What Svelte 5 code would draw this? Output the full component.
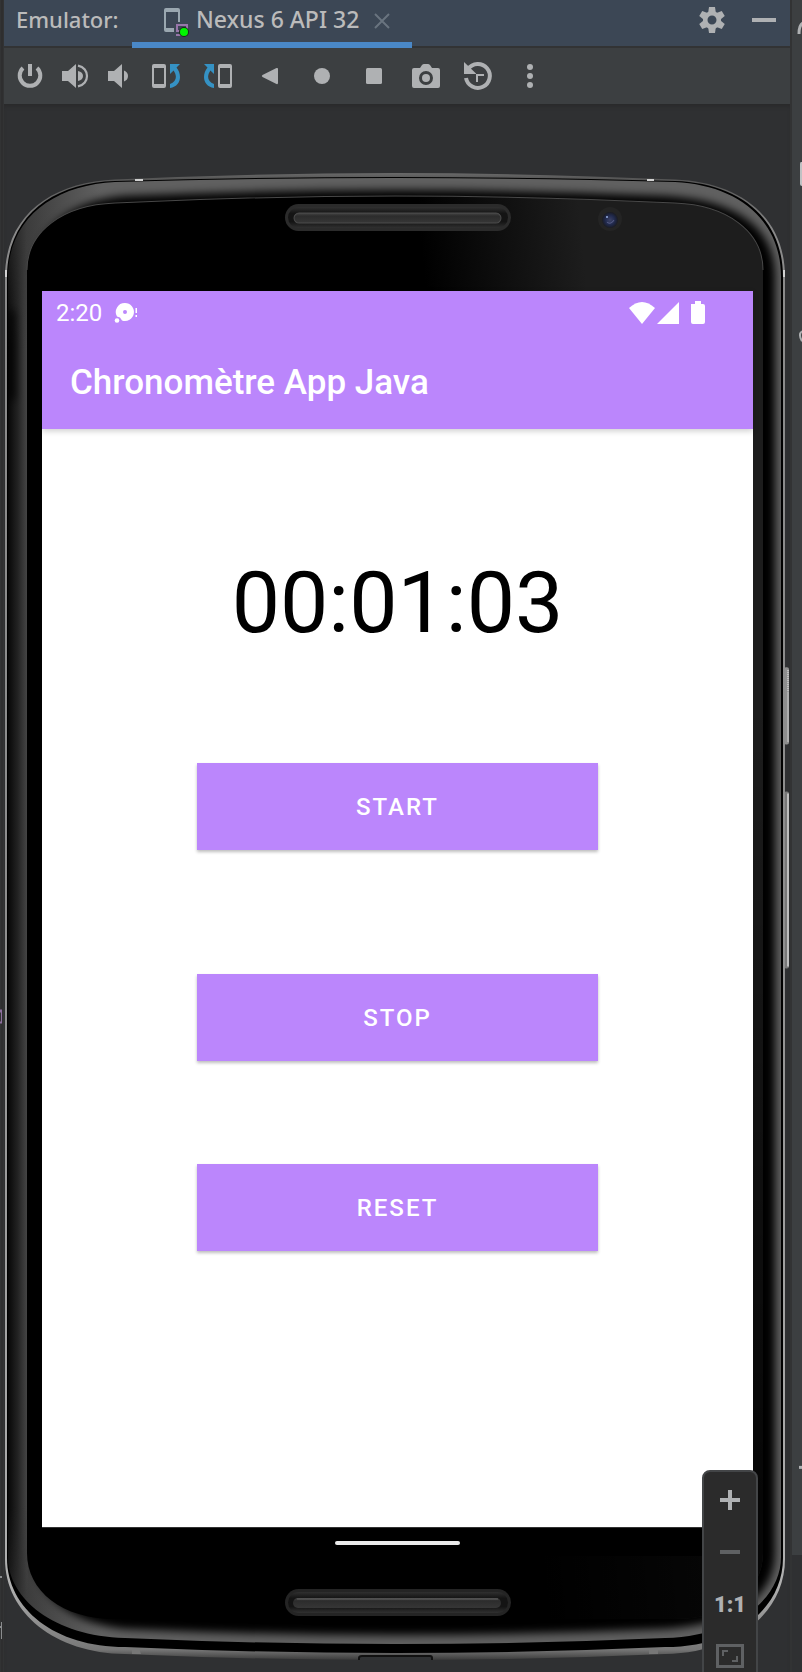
<script>
  import { onDestroy } from 'svelte';

  let seconds = $state(63);
  let timer = null;

  const pad = (n) => String(n).padStart(2, '0');
  let display = $derived(
    `${pad(Math.floor(seconds / 3600))}:${pad(Math.floor(seconds / 60) % 60)}:${pad(seconds % 60)}`
  );

  function start() {
    if (!timer) timer = setInterval(() => (seconds += 1), 1000);
  }
  function stop() {
    clearInterval(timer);
    timer = null;
  }
  function reset() {
    stop();
    seconds = 0;
  }
  onDestroy(stop);
</script>

<div class="ide">
  <div class="edge left" aria-hidden="true">
    <svg viewBox="0 0 4 1672" preserveAspectRatio="none">
      <path d="M2 0V1672" stroke="#2b2b2b" stroke-width="1" />
      <path d="M0 1009H2V1023H0V1021H1V1012H0Z" fill="#8d6f9e" />
      <path d="M0 1575H2V1577H0ZM1 1621H2V1638H1ZM0 1625H1V1627H0Z" fill="#8a8c8e" />
    </svg>
  </div>

  <main class="panel">
    <header class="titlebar">
      <span class="label">Emulator:</span>
      <div class="tab">
        <svg width="26" height="30" viewBox="0 0 26 30" aria-hidden="true">
          <path fill="#9aa7b0" fill-rule="evenodd" d="M2 0H14Q16 0 16 2V14H14V4H2V20H10V24H2Q0 24 0 22V2Q0 0 2 0Z" />
          <path fill="#9876aa" d="M12 16H24V24H22V18H14V22H18V24H12ZM12 26H17V28H12Z" />
          <circle cx="20" cy="24" r="5" fill="#1c2a1c" />
          <circle cx="20" cy="24" r="4" fill="#00f600" />
        </svg>
        <span class="name">Nexus 6 API 32</span>
        <button class="close" aria-label="Close tab">
          <svg width="16" height="16" viewBox="0 0 16 16"><path d="M1 1L15 15M15 1L1 15" stroke="#69747f" stroke-width="2" /></svg>
        </button>
      </div>
      <div class="actions">
        <button aria-label="Settings">
          <svg width="28" height="28" viewBox="-14 -14 28 28">
            <g fill="#afb1b3">
              {#each [0, 60, 120, 180, 240, 300] as angle}
                <path d="M-3 -13H3L4 -6H-4Z" transform="rotate({angle})" />
              {/each}
            </g>
            <circle r="6.8" fill="none" stroke="#afb1b3" stroke-width="4.6" />
          </svg>
        </button>
        <button aria-label="Hide">
          <svg width="28" height="28" viewBox="-14 -14 28 28"><path d="M-12 -2H12V2H-12Z" fill="#afb1b3" /></svg>
        </button>
      </div>
    </header>

    <div class="toolbar" role="toolbar" aria-label="Emulator controls">
      <button class="narrow" aria-label="Power">
        <svg viewBox="-16 -16 32 32"><path d="M-7 -8A10.300 10.300 0 1 0 7 -8" fill="none" stroke="#afb1b3" stroke-width="4" /><path d="M-2 -12H2V0H-2Z" /></svg>
      </button>
      <button class="narrow" aria-label="Volume up">
        <svg viewBox="-16 -16 32 32"><path d="M-12 -5H-6L2 -12V12L-6 5H-12ZM4 -5Q9 -4 9 0T4 5Z" /><path d="M4 -10.300C16 -8 16 8 4 10.300" fill="none" stroke="#afb1b3" stroke-width="2.2" /></svg>
      </button>
      <button class="narrow" aria-label="Volume down">
        <svg viewBox="-16 -16 32 32"><path d="M-10 -5H-4L4 -12V12L-4 5H-10ZM6 -5.500Q10 -4 10 0T6 5.500Z" /></svg>
      </button>
      <button aria-label="Rotate left">
        <svg viewBox="-16 -16 32 32">
          <path fill-rule="evenodd" d="M-12 -12H-2Q0 -12 0 -10V10Q0 12 -2 12H-12Q-14 12 -14 10V-10Q-14 -12 -12 -12ZM-12 -8V8H-2V-8Z" />
          <path fill="#3592c4" d="M4 -12H14L10.500 -8.500C16.500 -1 15 10 4 12V8C10.500 6 11.500 0 7.600 -5.600L4 -2Z" />
        </svg>
      </button>
      <button aria-label="Rotate right">
        <svg viewBox="-16 -16 32 32">
          <g transform="scale(-1 1)">
            <path fill-rule="evenodd" d="M-12 -12H-2Q0 -12 0 -10V10Q0 12 -2 12H-12Q-14 12 -14 10V-10Q-14 -12 -12 -12ZM-12 -8V8H-2V-8Z" />
            <path fill="#3592c4" d="M4 -12H14L10.500 -8.500C16.500 -1 15 10 4 12V8C10.500 6 11.500 0 7.600 -5.600L4 -2Z" />
          </g>
        </svg>
      </button>
      <button aria-label="Back">
        <svg viewBox="-16 -16 32 32"><path d="M-7.500 -1L6.500 -8Q8 -8.500 8 -7V7Q8 8.500 6.500 8L-7.500 1Q-9 0 -7.500 -1Z" /></svg>
      </button>
      <button aria-label="Home">
        <svg viewBox="-16 -16 32 32"><circle r="8" /></svg>
      </button>
      <button aria-label="Overview">
        <svg viewBox="-16 -16 32 32"><rect x="-8" y="-8" width="16" height="16" rx="1.500" /></svg>
      </button>
      <button aria-label="Screenshot">
        <svg viewBox="-16 -16 32 32">
          <path fill-rule="evenodd" d="M-12 -8H-6L-4 -11Q-3 -12 -2 -12H2Q3 -12 4 -11L6 -8H12Q14 -8 14 -6V10Q14 12 12 12H-12Q-14 12 -14 10V-6Q-14 -8 -12 -8ZM0 -5A7 7 0 1 0 0 9A7 7 0 1 0 0 -5Z" />
          <circle cy="2" r="4" />
        </svg>
      </button>
      <button aria-label="Snapshots">
        <svg viewBox="-16 -16 32 32">
          <path d="M-10 -7A12 12 0 1 1 -12 2" fill="none" stroke="#afb1b3" stroke-width="4" />
          <path d="M-14 -14L-2 -2.500V-2H-14ZM-2 -2H6V0H0V6H-2Z" />
        </svg>
      </button>
      <button aria-label="More">
        <svg viewBox="-16 -16 32 32"><circle cy="-9" r="3" /><circle r="3" /><circle cy="9" r="3" /></svg>
      </button>
    </div>

    <section class="stage">
      <svg class="phone" viewBox="4 104 786 1568" preserveAspectRatio="none" aria-hidden="true">
        <defs>
          <linearGradient id="rim" x1="0" x2="0" y1="0" y2="1">
            <stop offset="0" stop-color="#6a6a6a" />
            <stop offset="0.004" stop-color="#555" />
            <stop offset="0.04" stop-color="#8a8a8a" />
            <stop offset="0.5" stop-color="#8e8e8e" />
            <stop offset="0.95" stop-color="#b0b0b0" />
            <stop offset="0.993" stop-color="#777" />
            <stop offset="1" stop-color="#3a3a3a" />
          </linearGradient>
          <linearGradient id="body" gradientUnits="userSpaceOnUse" x1="8" x2="782" y1="0" y2="0">
            <stop offset="0" stop-color="#1c1c1c" />
            <stop offset="0.024" stop-color="#3c3c3c" />
            <stop offset="0.12" stop-color="#606060" />
            <stop offset="1" stop-color="#606060" />
          </linearGradient>
          <linearGradient id="leftshade" gradientUnits="userSpaceOnUse" x1="8" x2="27" y1="0" y2="0">
            <stop offset="0" stop-color="#070707" />
            <stop offset="0.500" stop-color="#222" />
            <stop offset="1" stop-color="#454545" />
          </linearGradient>
          <linearGradient id="sidefade" x1="0" x2="0" y1="0" y2="1">
            <stop offset="0" stop-color="#000" />
            <stop offset="0.08" stop-color="#fff" />
            <stop offset="0.93" stop-color="#fff" />
            <stop offset="1" stop-color="#000" />
          </linearGradient>
          <mask id="sidemask" maskUnits="userSpaceOnUse" x="0" y="240" width="40" height="1360">
            <rect x="0" y="240" width="40" height="1360" fill="url(#sidefade)" />
          </mask>
          <linearGradient id="glass" gradientUnits="userSpaceOnUse" x1="420" x2="580" y1="230" y2="215">
            <stop offset="0" stop-color="#000" />
            <stop offset="1" stop-color="#1d1d1d" />
          </linearGradient>
          <linearGradient id="fade" gradientUnits="userSpaceOnUse" x1="0" x2="0" y1="700" y2="1500">
            <stop offset="0" stop-color="#000" stop-opacity="0" />
            <stop offset="1" stop-color="#000" stop-opacity="0.8" />
          </linearGradient>
          <linearGradient id="well" x1="0" x2="0" y1="0" y2="1">
            <stop offset="0" stop-color="#303030" />
            <stop offset="0.300" stop-color="#141414" />
            <stop offset="0.700" stop-color="#141414" />
            <stop offset="1" stop-color="#303030" />
          </linearGradient>
          <linearGradient id="bar" x1="0" x2="0" y1="0" y2="1">
            <stop offset="0" stop-color="#444" />
            <stop offset="0.300" stop-color="#2c2c2c" />
            <stop offset="1" stop-color="#363636" />
          </linearGradient>
          <radialGradient id="lens">
            <stop offset="0" stop-color="#3c4266" />
            <stop offset="0.600" stop-color="#20294c" />
            <stop offset="1" stop-color="#1a1b22" />
          </radialGradient>
          <filter id="soft" filterUnits="userSpaceOnUse" x="0" y="160" width="800" height="1510">
            <feGaussianBlur stdDeviation="4" />
          </filter>
          <clipPath id="bodyclip">
            <path d="M8 277C8 218 54 185 115 182Q260 178 395 178Q530 178 675 182C736 185 781 218 781 277V1556C781 1598 736 1635 665 1637Q530 1643 395 1643Q260 1643 125 1637C54 1635 8 1598 8 1556Z" />
          </clipPath>
        </defs>

        <!-- volume and power keys -->
        <rect x="784" y="667" width="5" height="77" rx="2" fill="#8d8d8d" />
        <path d="M788 670V741" stroke="#d0d0d0" stroke-width="2" stroke-dasharray="1 1" />
        <rect x="784" y="791" width="5" height="177" rx="2" fill="#777" />
        <path d="M788 793V966" stroke="#d4d4d4" stroke-width="1.500" />

        <!-- metal rim, seam, body and glass -->
        <path fill="url(#rim)" d="M5 277C5 215 52 182 115 179.500Q260 173 395 173Q530 173 675 179.500C738 182 785 215 785 277V1558C785 1612 735 1652 665 1653Q530 1659 395 1659Q260 1659 125 1653C55 1652 5 1612 5 1558Z" />
        <path fill="#000" d="M7 277C7 216 53 183 115 181Q260 177 395 177Q530 177 675 181C737 183 783 216 783 277V1557C783 1608 735 1646 665 1646Q530 1652 395 1652Q260 1652 125 1646C55 1646 7 1608 7 1557Z" />
        <g clip-path="url(#bodyclip)">
          <path fill="url(#body)" d="M0 170H790V1650H0Z" />
          <path fill="#000" filter="url(#soft)" d="M34 277C34 228 72 200 125 196Q260 190 395 190Q530 190 665 196C738 200 775 228 775 277V1552C775 1594 738 1623 665 1628Q530 1634 395 1634Q260 1634 125 1628C72 1623 34 1594 34 1552Z" />
          <g mask="url(#sidemask)">
            <rect x="8" y="240" width="20" height="1360" fill="url(#leftshade)" />
          </g>
          <rect x="8" y="310" width="6" height="90" rx="3" fill="#000" filter="url(#soft)" />
        </g>
        <path fill="#000" d="M27 270C27 232 62 205 115 203Q260 196 395 196Q530 196 675 203C728 205 763 232 763 270V1552C763 1590 728 1618 675 1618H115C62 1618 27 1590 27 1552Z" />
        <path fill="url(#glass)" d="M395 196Q530 196 675 203C728 205 763 232 763 270V1552C763 1590 728 1618 675 1618H395Z" />
        <path fill="url(#fade)" d="M395 700H763V1552C763 1590 728 1618 675 1618H395Z" />
        <path fill="none" stroke="#484848" d="M27 270C27 232 62 205 115 203Q260 196 395 196Q530 196 675 203C728 205 763 232 763 270" />

        <!-- antenna breaks -->
        <path fill="#d2d2d2" d="M135 179H143V181H135ZM647 179H654V181H647ZM5 270H7V277H5ZM783 270H785V277H783Z" />
        <path fill="#777" d="M132 1647H139L141 1653H132ZM649 1647H658V1653H649Z" />
        <path d="M359 1659V1657Q359 1655 362 1655H430Q432 1655 432 1657V1659" fill="#303234" stroke="#111" stroke-width="2" />

        <!-- speaker grilles -->
        <rect x="285" y="204" width="226" height="27" rx="13.500" fill="#2b2b2b" />
        <rect x="288" y="207" width="220" height="21" rx="10.500" fill="url(#well)" />
        <rect x="294" y="213" width="207" height="10" rx="5" fill="url(#bar)" stroke="#4c4c4c" />
        <rect x="285" y="1588" width="226" height="27" rx="13.500" fill="#242424" />
        <rect x="288" y="1591" width="220" height="21" rx="10.500" fill="url(#well)" />
        <rect x="293" y="1597" width="208" height="10" rx="5" fill="url(#bar)" />
        <path d="M297 1598H498" stroke="#606060" />

        <!-- front camera -->
        <circle cx="610" cy="219" r="12" fill="#242424" />
        <circle cx="610" cy="220" r="8" fill="url(#lens)" />
        <circle cx="607" cy="217" r="1" fill="#9ab0e0" />
        <path d="M607 222Q611 225 614 220" fill="none" stroke="#555b85" />
      </svg>

      <div class="screen">
        <div class="appheader">
          <div class="status">
            <span>2:20</span>
            <svg class="notice" width="24" height="22" viewBox="0 0 24 22" aria-hidden="true">
              <path fill="#fff" fill-rule="evenodd" d="M11 1A9 9 0 1 1 8 18.500L6 15.500L3 14.500A9 9 0 0 1 11 1ZM11 8A2 2 0 1 0 11 12A2 2 0 1 0 11 8Z" />
              <circle cx="3" cy="18.500" r="2.300" fill="#fff" />
              <path fill="#fff" d="M21.500 6H23V11H21.500ZM21.500 13H23V15H21.500Z" />
            </svg>
            <svg class="signals" width="78" height="26" viewBox="0 0 78 26" aria-hidden="true">
              <path fill="#fff" d="M1 8Q14 -4 27 8L14 24Z" />
              <path fill="#fff" d="M29 24L51 2V24Z" />
              <path fill="#fff" d="M63 4H67V1H73V4H75Q77 4 77 6V22Q77 24 75 24H65Q63 24 63 22Z" />
            </svg>
          </div>
          <h1>Chronomètre App Java</h1>
        </div>

        <div class="content">
          <output class="time">{display}</output>
          <button class="start" onclick={start}>START</button>
          <button class="stop" onclick={stop}>STOP</button>
          <button class="reset" onclick={reset}>RESET</button>
        </div>

        <div class="gesture"><span></span></div>
      </div>

      <div class="zoom">
        <button aria-label="Zoom in"><svg width="20" height="20" viewBox="0 0 20 20"><path d="M8 0H12V8H20V12H12V20H8V12H0V8H8Z" fill="#afb1b3" /></svg></button>
        <button aria-label="Zoom out"><svg width="20" height="20" viewBox="0 0 20 20"><path d="M0 8H20V12H0Z" fill="#5f6163" /></svg></button>
        <button class="ratio">1:1</button>
        <button aria-label="Zoom to fit">
          <svg width="28" height="24" viewBox="0 0 28 24"><path d="M1.500 1.500H26.500V22.500H1.500Z" fill="none" stroke="#5f6163" stroke-width="3" /><path d="M7 12V7H12M16 17H21V12" fill="none" stroke="#5f6163" stroke-width="2" /></svg>
        </button>
      </div>
    </section>
  </main>

  <div class="edge right" aria-hidden="true">
    <svg viewBox="0 0 12 1672" preserveAspectRatio="none">
      <path fill="#3c3f41" d="M2 0H12V1554H2Z" />
      <path fill="#2f3032" d="M2 1554H12V1672H2Z" />
      <path d="M9 34Q9 25 13 23" fill="none" stroke="#afb1b3" stroke-width="3" />
      <path d="M12 162H11Q10 162 10 164V184Q10 186 12 186Z" fill="#bfc1c3" />
      <path d="M12 331Q8 334 12 341" fill="none" stroke="#afb1b3" stroke-width="2" />
      <path d="M9 1465H12V1468H9Z" fill="#afb1b3" />
    </svg>
  </div>
</div>

<style>
  :global(body) {
    margin: 0;
    background: #2f3032;
  }
  .ide {
    display: grid;
    grid-template-columns: 4px minmax(0, 1fr) 12px;
    background: #2f3032;
    font-family: 'Noto Sans', sans-serif;
  }
  button {
    margin: 0;
    padding: 0;
    border: 0;
    background: none;
    color: inherit;
    font: inherit;
    cursor: pointer;
  }
  svg {
    display: block;
  }
  .edge {
    position: relative;
    background: #323334;
  }
  .edge svg {
    position: absolute;
    inset: 0;
    width: 100%;
    height: 100%;
  }
  .titlebar {
    display: flex;
    height: 46px;
    border-bottom: 2px solid #323334;
    background: #3c4755;
    color: #bbbbbb;
    font-size: 22px;
    font-weight: 500;
    line-height: 38px;
  }
  .label {
    width: 128px;
    padding-left: 12px;
    box-sizing: border-box;
  }
  .tab {
    display: flex;
    box-sizing: border-box;
    width: 280px;
    height: 48px;
    padding: 0 22px 0 32px;
    border-bottom: 6px solid #4a88c7;
    font-size: 23px;
  }
  .tab > svg {
    margin-top: 8px;
  }
  .name {
    margin-left: 6px;
    white-space: nowrap;
  }
  .close {
    display: flex;
    align-items: center;
    margin-left: auto;
  }
  .actions {
    display: flex;
    gap: 24px;
    margin-left: auto;
    padding-right: 12px;
  }
  .actions button {
    height: 40px;
  }
  .toolbar {
    display: flex;
    height: 56px;
    padding-left: 4px;
    background: #3c3f41;
  }
  .toolbar button {
    display: grid;
    place-items: center;
    width: 52px;
  }
  .toolbar .narrow {
    width: 44px;
  }
  .toolbar svg {
    width: 32px;
    height: 32px;
    fill: #afb1b3;
  }
  .stage {
    position: relative;
    overflow: hidden;
    padding: 187px 37px 117px 38px;
    background: #2f3032;
    box-shadow: inset 0 4px 4px -2px #29292a;
  }
  .phone {
    position: absolute;
    inset: 0;
    width: 100%;
    height: 100%;
  }
  .screen {
    position: relative;
    font-family: Roboto, sans-serif;
  }
  .appheader {
    position: relative;
    background: #bb86fc;
    color: #fff;
    box-shadow: 0 2px 6px rgba(0, 0, 0, 0.2);
  }
  .status {
    display: flex;
    align-items: center;
    height: 44px;
    padding: 0 47px 0 14px;
    box-sizing: border-box;
    font-size: 24px;
  }
  .notice {
    margin-left: 12px;
  }
  .signals {
    margin-left: auto;
  }
  h1 {
    margin: 0;
    padding: 0 0 0 28px;
    font-size: 35px;
    font-weight: 500;
    height: 94px;
    line-height: 96px;
  }
  .content {
    display: flex;
    flex-direction: column;
    align-items: center;
    padding: 122px 0 276px;
    background: #fff;
  }
  .time {
    color: #000;
    font-size: 86px;
    line-height: 104px;
  }
  .content button {
    width: 401px;
    max-width: 80%;
    height: 87px;
    background: #bb86fc;
    box-shadow: 0 2px 3px rgba(0, 0, 0, 0.26);
    color: #fff;
    font-size: 24px;
    font-weight: 500;
    letter-spacing: 2px;
  }
  .content .start {
    margin-top: 108px;
  }
  .content .stop {
    margin-top: 124px;
  }
  .content .reset {
    margin-top: 103px;
  }
  .gesture {
    display: grid;
    place-items: center;
    box-sizing: border-box;
    height: 29px;
    padding-top: 2px;
    border-top: 1px solid #333;
    background: #000;
  }
  .gesture span {
    width: 125px;
    height: 4px;
    border-radius: 2px;
    background: #ebebeb;
  }
  .zoom {
    position: absolute;
    right: 32px;
    bottom: -13px;
    box-sizing: border-box;
    width: 56px;
    padding: 2px 0;
    border: 2px solid #434547;
    border-radius: 8px;
    background: #2b2b2b;
  }
  .zoom button {
    display: grid;
    place-items: center;
    width: 100%;
    height: 52px;
  }
  .zoom .ratio {
    color: #afb1b3;
    font-family: Roboto, sans-serif;
    font-size: 22px;
    font-weight: 900;
  }
</style>
